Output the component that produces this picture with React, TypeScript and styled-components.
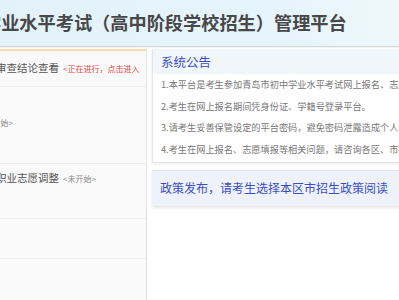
import React from 'react';
import styled, { createGlobalStyle } from 'styled-components';

const GlobalStyle = createGlobalStyle`
    html, body {
        margin: 0;
        padding: 0;
        overflow: hidden;
        background: #ffffff;
        font-family: "Noto Sans CJK SC", "Noto Sans", sans-serif;
    }
`;

const stages = [
    { id: '1', title: '资格审查结论查看', status: '<正在进行，点击进入', active: true, indent: 83, pad: 7, height: 36 },
    { id: '2', title: '', status: '<未开始>', active: false, indent: 88, pad: 26, height: 77 },
    { id: '3', title: '中等职业志愿调整', status: '<未开始>', active: false, indent: 83, pad: 4, height: 55 },
    { id: '4', title: '', status: '', active: false, indent: 83, pad: 4, height: 40 },
];

const notices = [
    '1.本平台是考生参加青岛市初中学业水平考试网上报名、志愿填报、成绩查询的唯一平台。',
    '2.考生在网上报名期间凭身份证、学籍号登录平台。',
    '3.请考生妥善保管设定的平台密码，避免密码泄露造成个人信息被篡改。',
    '4.考生在网上报名、志愿填报等相关问题，请咨询各区、市招生考试机构。',
];

const App: React.FC = () => {
    return (
        <Page>
            <GlobalStyle />
            <Header>
                <Title>青岛市初中学业水平考试（高中阶段学校招生）管理平台</Title>
            </Header>
            <Body>
                <StagePanel>
                    {stages.map((s) => (
                        <StageRow key={s.id} $indent={s.indent} $pad={s.pad} $height={s.height}>
                            {s.title && <StageTitle>{s.title}</StageTitle>}
                            {s.status && <StageStatus $active={s.active}>{s.status}</StageStatus>}
                        </StageRow>
                    ))}
                </StagePanel>
                <RightColumn>
                    <NoticeBox>
                        <NoticeHead>系统公告</NoticeHead>
                        <NoticeList>
                            {notices.map((n) => (
                                <NoticeItem key={n}>{n}</NoticeItem>
                            ))}
                        </NoticeList>
                    </NoticeBox>
                    <PolicyBar>政策发布，请考生选择本区市招生政策阅读</PolicyBar>
                </RightColumn>
            </Body>
        </Page>
    );
};

export default App;

const Page = styled.div`
    width: 680px;
    margin-left: -128px;
    min-height: 300px;
`;

const Header = styled.div`
    height: 46px;
    display: flex;
    align-items: center;
    padding-left: 20px;
    background: linear-gradient(90deg, #e2f2fa 0%, #e6f4fb 60%, #eef8fc 75%, #e4f3fa 100%);
    border-bottom: 1px solid #cdd9d9;
    box-shadow: 0 1px 1px rgba(0, 0, 0, 0.04);
`;

const Title = styled.h1`
    margin: 0;
    font-size: 18.2px;
    font-weight: 700;
    color: #484848;
    white-space: nowrap;
    line-height: 24px;
    padding-bottom: 3px;
`;

const Body = styled.div`
    display: flex;
    gap: 5px;
    padding: 2px 0 0 20px;
`;

const StagePanel = styled.div`
    width: 255px;
    flex: none;
    min-height: 260px;
    background: #fafafa;
    border-top: 2px solid #f7dcb3;
    border-right: 1px solid #e3e3e3;
    box-sizing: border-box;
`;

const StageRow = styled.div<{ $indent: number; $pad: number; $height: number }>`
    height: ${(p) => p.$height}px;
    padding: ${(p) => p.$pad}px 0 0 ${(p) => p.$indent}px;
    box-sizing: border-box;
    display: flex;
    align-items: baseline;
    gap: 4px;
    border-bottom: 1px solid #eeeeee;
    line-height: 20px;
    white-space: nowrap;
`;

const StageTitle = styled.span`
    font-size: 10.5px;
    color: #555555;
`;

const StageStatus = styled.span<{ $active: boolean }>`
    font-size: 8px;
    color: ${(p) => (p.$active ? '#e8463d' : '#888888')};
`;

const RightColumn = styled.div`
    flex: 1;
    display: flex;
    flex-direction: column;
    gap: 7px;
    min-width: 0;
`;

const NoticeBox = styled.div`
    border: 1px solid #e6e6e6;
    border-top: none;
    background: #ffffff;
    box-shadow: 0 1px 3px rgba(0, 0, 0, 0.08);
`;

const NoticeHead = styled.div`
    height: 25px;
    line-height: 25px;
    padding-left: 8px;
    background: #f1f6fa;
    color: #3c4ec2;
    font-size: 12.5px;
`;

const NoticeList = styled.div`
    padding: 0 0 2px 8px;
`;

const NoticeItem = styled.div`
    height: 21.5px;
    line-height: 21.5px;
    font-size: 9.2px;
    color: #777777;
    white-space: nowrap;
    overflow: hidden;
`;

const PolicyBar = styled.div`
    height: 36px;
    line-height: 34px;
    padding-left: 8px;
    background: #eef3fb;
    border-top: 1px solid #e0e6ee;
    box-shadow: 0 2px 3px rgba(0, 0, 0, 0.1);
    color: #3c4ec2;
    font-size: 12px;
    white-space: nowrap;
    box-sizing: border-box;
`;
